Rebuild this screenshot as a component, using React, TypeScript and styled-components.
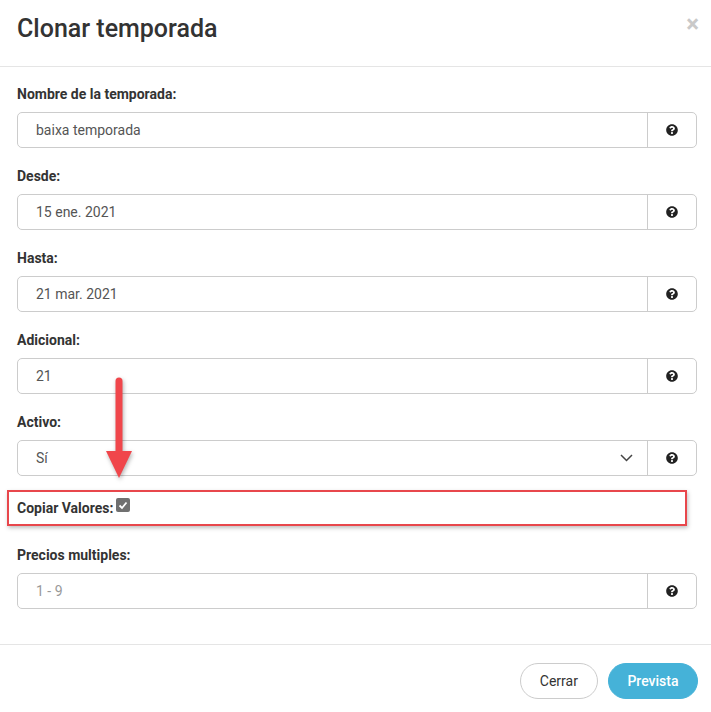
import React from "react";
import styled, { createGlobalStyle } from "styled-components";
import { FaQuestionCircle } from "react-icons/fa";

const GlobalStyle = createGlobalStyle`
  html, body {
    margin: 0;
    padding: 0;
    background: #fff;
  }
  body {
    font-family: Roboto, "Liberation Sans", Arial, sans-serif;
    color: #333;
  }
  * {
    box-sizing: border-box;
  }
`;

const Modal = styled.div`
  width: 711px;
  height: 712px;
  background: #fff;
  display: flex;
  flex-direction: column;
`;

const Header = styled.div`
  height: 67px;
  border-bottom: 1px solid #e5e5e5;
  display: flex;
  align-items: flex-start;
  justify-content: space-between;
  padding: 13px 14px 0 17px;
`;

const Title = styled.h4`
  margin: 0;
  font-size: 25px;
  font-weight: 500;
  line-height: 32px;
  color: #333;
`;

const Close = styled.span`
  font-size: 24px;
  font-weight: 700;
  color: #c9c9c9;
  line-height: 18px;
  margin-top: 2px;
  margin-right: -2px;
`;

const Body = styled.div`
  flex: 1;
  padding: 17px 14px 0 17px;
  position: relative;
`;

const Group = styled.div`
  margin-bottom: 18px;
`;

const Label = styled.label`
  display: block;
  font-size: 14px;
  font-weight: 700;
  line-height: 20px;
  margin-bottom: 8px;
  color: #333;
`;

const InputGroup = styled.div`
  display: flex;
  height: 36px;
  border: 1px solid #ccc;
  border-radius: 5px;
  overflow: hidden;
`;

const Field = styled.div<{ $muted?: boolean }>`
  flex: 1;
  display: flex;
  align-items: center;
  justify-content: space-between;
  padding: 0 14px 0 18px;
  font-size: 14px;
  color: ${(p) => (p.$muted ? "#999" : "#555")};
`;

const Addon = styled.div`
  width: 49px;
  border-left: 1px solid #ccc;
  display: flex;
  align-items: center;
  justify-content: center;
  color: #222;
  font-size: 12px;
`;

const Highlight = styled.div`
  width: 680px;
  height: 36px;
  margin: -4px 0 19px -10px;
  border: 2px solid #e8474c;
  box-shadow: 1px 2px 4px rgba(0, 0, 0, 0.25);
  display: flex;
  align-items: center;
  padding: 0 8px 0 8px;
`;

const CheckLabel = styled.span`
  font-size: 14px;
  font-weight: 700;
  color: #333;
`;

const Checkbox = styled.span`
  display: inline-flex;
  width: 14px;
  height: 14px;
  border-radius: 2px;
  background: #707070;
  margin-left: 3px;
  margin-top: -6px;
  align-items: center;
  justify-content: center;
`;

const Arrow = styled.svg`
  position: absolute;
  left: 100px;
  top: 308px;
  filter: drop-shadow(1px 2px 2px rgba(0, 0, 0, 0.3));
`;

const Footer = styled.div`
  height: 68px;
  border-top: 1px solid #e5e5e5;
  display: flex;
  justify-content: flex-end;
  align-items: flex-start;
  gap: 10px;
  padding: 18px 13px 0 0;
`;

const Button = styled.button<{ $primary?: boolean }>`
  height: 36px;
  border-radius: 18px;
  padding: 0 ${(p) => (p.$primary ? "18.5px" : "19px")};
  font-family: inherit;
  font-size: 14px;
  font-weight: ${(p) => (p.$primary ? 500 : 400)};
  border: 1px solid ${(p) => (p.$primary ? "#45b2d8" : "#ccc")};
  background: ${(p) => (p.$primary ? "#45b2d8" : "#fff")};
  color: ${(p) => (p.$primary ? "#fff" : "#333")};
`;

const Chevron = () => (
  <svg width="13" height="8" viewBox="0 0 13 8">
    <path d="M1 1l5.5 5.5L12 1" fill="none" stroke="#444" strokeWidth="1.5" />
  </svg>
);

const Help = () => (
  <Addon>
    <FaQuestionCircle size={12} />
  </Addon>
);

type FieldProps = { label: string; value: string; muted?: boolean; select?: boolean };

const FormField = ({ label, value, muted, select }: FieldProps) => (
  <Group>
    <Label>{label}</Label>
    <InputGroup>
      <Field $muted={muted}>
        <span>{value}</span>
        {select && <Chevron />}
      </Field>
      <Help />
    </InputGroup>
  </Group>
);

export default function App() {
  return (
    <Modal>
      <GlobalStyle />
      <Header>
        <Title>Clonar temporada</Title>
        <Close>×</Close>
      </Header>
      <Body>
        <FormField label="Nombre de la temporada:" value="baixa temporada" />
        <FormField label="Desde:" value="15 ene. 2021" />
        <FormField label="Hasta:" value="21 mar. 2021" />
        <FormField label="Adicional:" value="21" />
        <FormField label="Activo:" value="Sí" select />
        <Highlight>
          <CheckLabel>Copiar Valores:</CheckLabel>
          <Checkbox>
            <svg width="10" height="9" viewBox="0 0 10 9">
              <path d="M1.5 4.5l2.5 2.5L8.5 1.5" fill="none" stroke="#fff" strokeWidth="1.8" />
            </svg>
          </Checkbox>
        </Highlight>
        <FormField label="Precios multiples:" value="1 - 9" muted />
        <Arrow width="40" height="110" viewBox="0 0 40 110">
          <path d="M19 6 L19 78" stroke="#f0464b" strokeWidth="7" strokeLinecap="round" />
          <path d="M6 76 L32 76 L19 103 Z" fill="#f0464b" />
        </Arrow>
      </Body>
      <Footer>
        <Button>Cerrar</Button>
        <Button $primary>Prevista</Button>
      </Footer>
    </Modal>
  );
}
